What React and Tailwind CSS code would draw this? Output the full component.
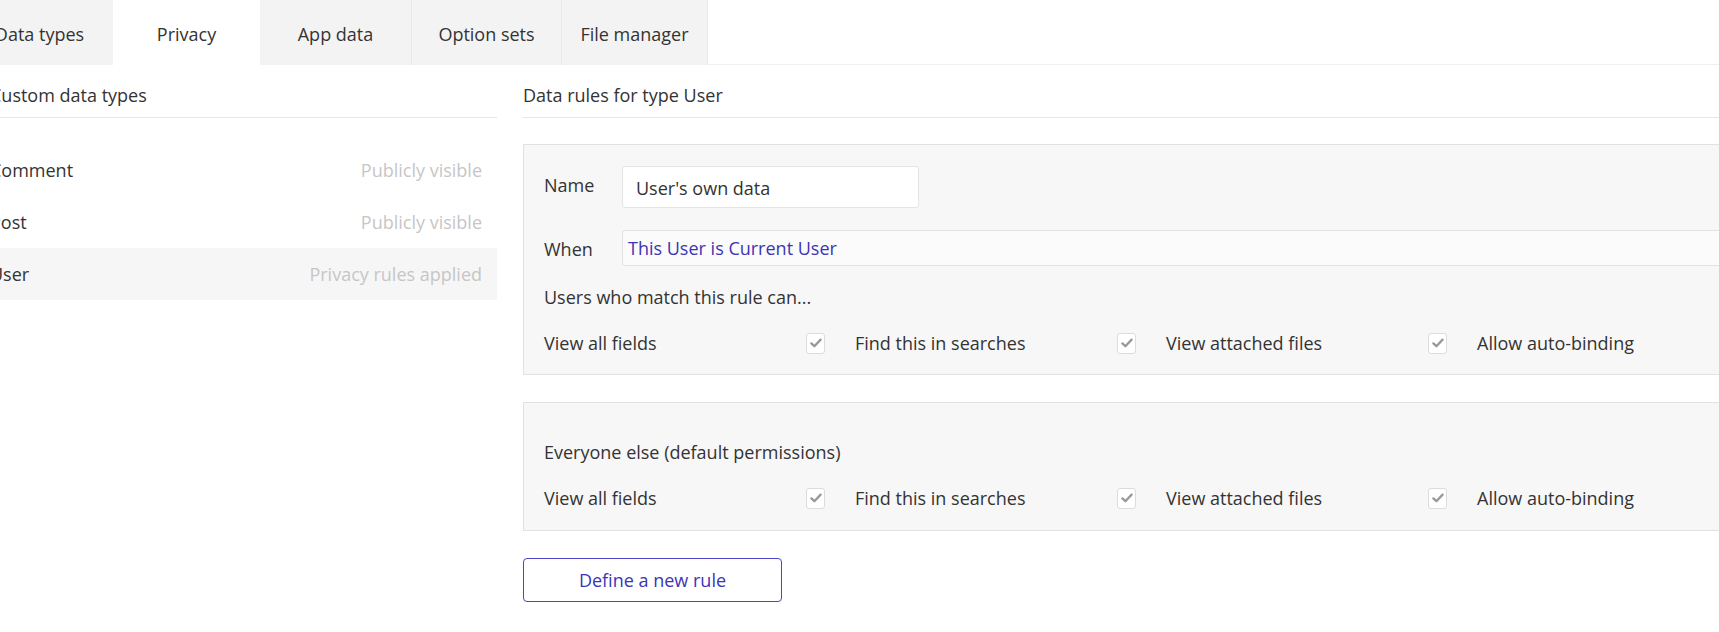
import React from "react";

function Check() {
  return (
    <div className="w-[19px] h-[21px] rounded-[3px] border border-[#dcdcdc] bg-white flex items-center justify-center shrink-0">
      <svg width="12" height="10" viewBox="0 0 12 10" fill="none">
        <path d="M1.4 5.4 L4.4 8.2 L10.6 1.6" stroke="#999999" strokeWidth="2.3" strokeLinecap="round" strokeLinejoin="round" />
      </svg>
    </div>
  );
}

function PermRow() {
  const items = ["View all fields", "Find this in searches", "View attached files", "Allow auto-binding"];
  return (
    <div className="flex items-center h-[24px] whitespace-nowrap">
      {items.map((t) => (
        <div key={t} className="flex items-center shrink-0 mr-[30px]">
          <span className="w-[262px]">{t}</span>
          <Check />
        </div>
      ))}
    </div>
  );
}

export default function App() {
  const tabs = [
    { t: "Data types", w: "w-[147px]", active: false },
    { t: "Privacy", w: "w-[147px]", active: true },
    { t: "App data", w: "w-[151px]", active: false },
    { t: "Option sets", w: "w-[150px]", active: false },
    { t: "File manager", w: "w-[146px]", active: false },
  ];
  return (
    <div className="w-[1719px] h-[632px] overflow-hidden bg-white text-[18px] text-[#333333] font-['Open_Sans',sans-serif]">
      {/* Tab bar */}
      <div className="flex h-[65px]">
        <div className="flex ml-[-34px] bg-[#f3f3f3] border-r border-[#e8e8e8]">
          {tabs.map((tab, i) => (
            <div
              key={tab.t}
              className={
                tab.w +
                " flex items-center justify-center pt-[3px] " +
                (tab.active
                  ? "bg-white"
                  : i > 2
                  ? "border-l border-[#e9e9e9]"
                  : "")
              }
            >
              {tab.t}
            </div>
          ))}
        </div>
        <div className="flex-1 border-b border-[#f0f0f0]" />
      </div>

      <div className="flex">
        {/* Left panel */}
        <div className="w-[507px] ml-[-10px] shrink-0">
          <div className="h-[53px] pt-[8px] flex items-center border-b border-[#e6e6e6]">
            Custom data types
          </div>
          <div className="mt-[26px]">
            <div className="h-[52px] flex items-center justify-between pr-[15px]">
              <span>Comment</span>
              <span className="text-[#c6c6c6]">Publicly visible</span>
            </div>
            <div className="h-[52px] flex items-center justify-between pr-[15px]">
              <span>Post</span>
              <span className="text-[#c6c6c6]">Publicly visible</span>
            </div>
            <div className="h-[52px] flex items-center justify-between pr-[15px] bg-[#f6f6f6]">
              <span>User</span>
              <span className="text-[#c6c6c6]">Privacy rules applied</span>
            </div>
          </div>
        </div>

        {/* Right panel */}
        <div className="ml-[26px] flex-1 min-w-0">
          <div className="h-[53px] pt-[8px] flex items-center border-b border-[#e6e6e6]">
            Data rules for type User
          </div>

          {/* Rule box */}
          <div className="mt-[26px] mr-[-20px] bg-[#f7f7f7] border border-[#e2e2e2] pl-[20px] pt-[21px] pb-[19px]">
            <div className="flex items-center h-[42px]">
              <span className="w-[78px] shrink-0 pb-[3px]">Name</span>
              <div className="w-[297px] h-[42px] bg-white border border-[#e4e4e4] rounded-[3px] flex items-center pl-[13px] pt-[2px]">
                User's own data
              </div>
            </div>
            <div className="flex items-center h-[36px] mt-[22px]">
              <span className="w-[78px] shrink-0 pt-[2px]">When</span>
              <div className="flex-1 h-[36px] bg-[#fbfbfb] border border-[#e2e2e2] rounded-l-[3px] flex items-center pl-[5px] text-[#3b35b6]">
                This User is Current User
              </div>
            </div>
            <div className="mt-[19px] h-[24px] flex items-center">Users who match this rule can...</div>
            <div className="mt-[22px]">
              <PermRow />
            </div>
          </div>

          {/* Default box */}
          <div className="mt-[27px] mr-[-20px] bg-[#f7f7f7] border border-[#e2e2e2] pl-[20px] pt-[37px] pb-[20px]">
            <div className="h-[24px] flex items-center">Everyone else (default permissions)</div>
            <div className="mt-[22px]">
              <PermRow />
            </div>
          </div>

          <button className="mt-[27px] w-[259px] h-[44px] border border-[#4a45c6] rounded-[4px] bg-white text-[#3b35b6] flex items-center justify-center">
            Define a new rule
          </button>
        </div>
      </div>
    </div>
  );
}
